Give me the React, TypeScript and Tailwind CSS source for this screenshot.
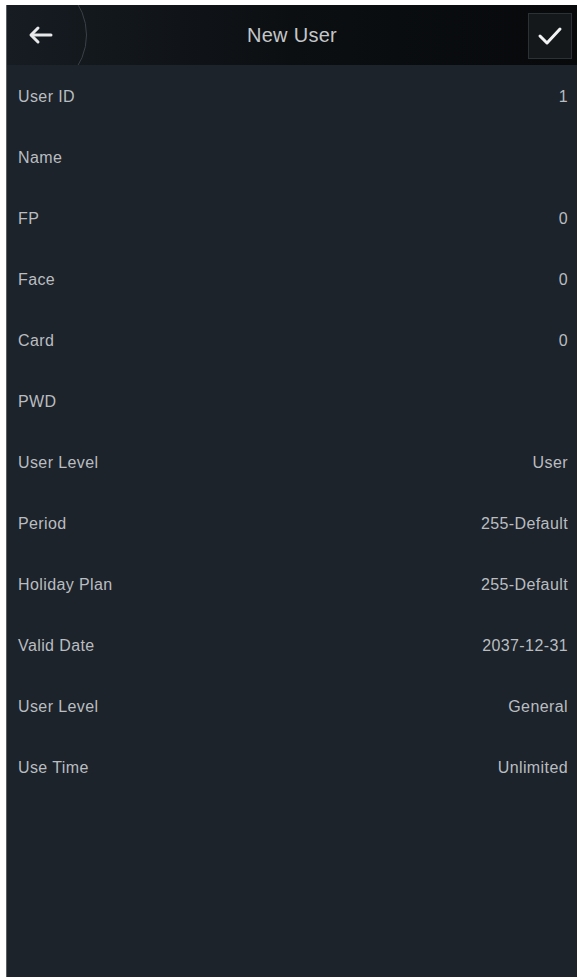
const rows: { label: string; value?: string }[] = [
  { label: 'User ID', value: '1' },
  { label: 'Name' },
  { label: 'FP', value: '0' },
  { label: 'Face', value: '0' },
  { label: 'Card', value: '0' },
  { label: 'PWD' },
  { label: 'User Level', value: 'User' },
  { label: 'Period', value: '255-Default' },
  { label: 'Holiday Plan', value: '255-Default' },
  { label: 'Valid Date', value: '2037-12-31' },
  { label: 'User Level', value: 'General' },
  { label: 'Use Time', value: 'Unlimited' },
];

export default function App() {
  return (
    <div className="min-h-[979px] w-[579px] bg-white pt-[5px] pl-[6px] font-['Liberation_Sans',Arial,sans-serif]">
      <div className="flex h-[972px] w-[571px] flex-col overflow-hidden border-l border-[#5a5f63] bg-[#1d232a]">
        {/* Top bar */}
        <div className="relative flex h-[60px] shrink-0 items-center justify-center overflow-hidden bg-gradient-to-r from-[#161c22] via-[#0c0f12] to-[#07090b]">
          <div className="absolute left-[-50px] top-[-30px] h-[120px] w-[130px] rounded-full border border-[#3a4046]" />
          <button className="absolute left-[14px] top-[14px] flex h-[32px] w-[40px] items-center justify-center">
            <svg width="26" height="20" viewBox="0 0 26 20" fill="none" stroke="#e6e8ea" strokeWidth="3" strokeLinecap="round" strokeLinejoin="round">
              <path d="M23 10H4" />
              <path d="M10 3L3 10l7 7" />
            </svg>
          </button>
          <span className="text-[20px] tracking-[0.3px] text-[#c4c7ca]">New User</span>
          <button className="absolute right-[5px] top-[8px] flex h-[46px] w-[44px] items-center justify-center border border-[#2c3135] bg-[#15181b]">
            <svg width="26" height="20" viewBox="0 0 26 20" fill="none" stroke="#f2f3f4" strokeWidth="3" strokeLinecap="round" strokeLinejoin="round">
              <path d="M3 10l7 7L23 3" />
            </svg>
          </button>
        </div>

        {/* Field list */}
        <div className="flex flex-col pt-[1px]">
          {rows.map((row, i) => (
            <div key={i} className="flex h-[61px] items-center justify-between pl-[11px] pr-[9px] text-[16px] tracking-[0.4px] text-[#b9bdc1]">
              <span>{row.label}</span>
              {row.value && <span>{row.value}</span>}
            </div>
          ))}
        </div>
      </div>
    </div>
  );
}
